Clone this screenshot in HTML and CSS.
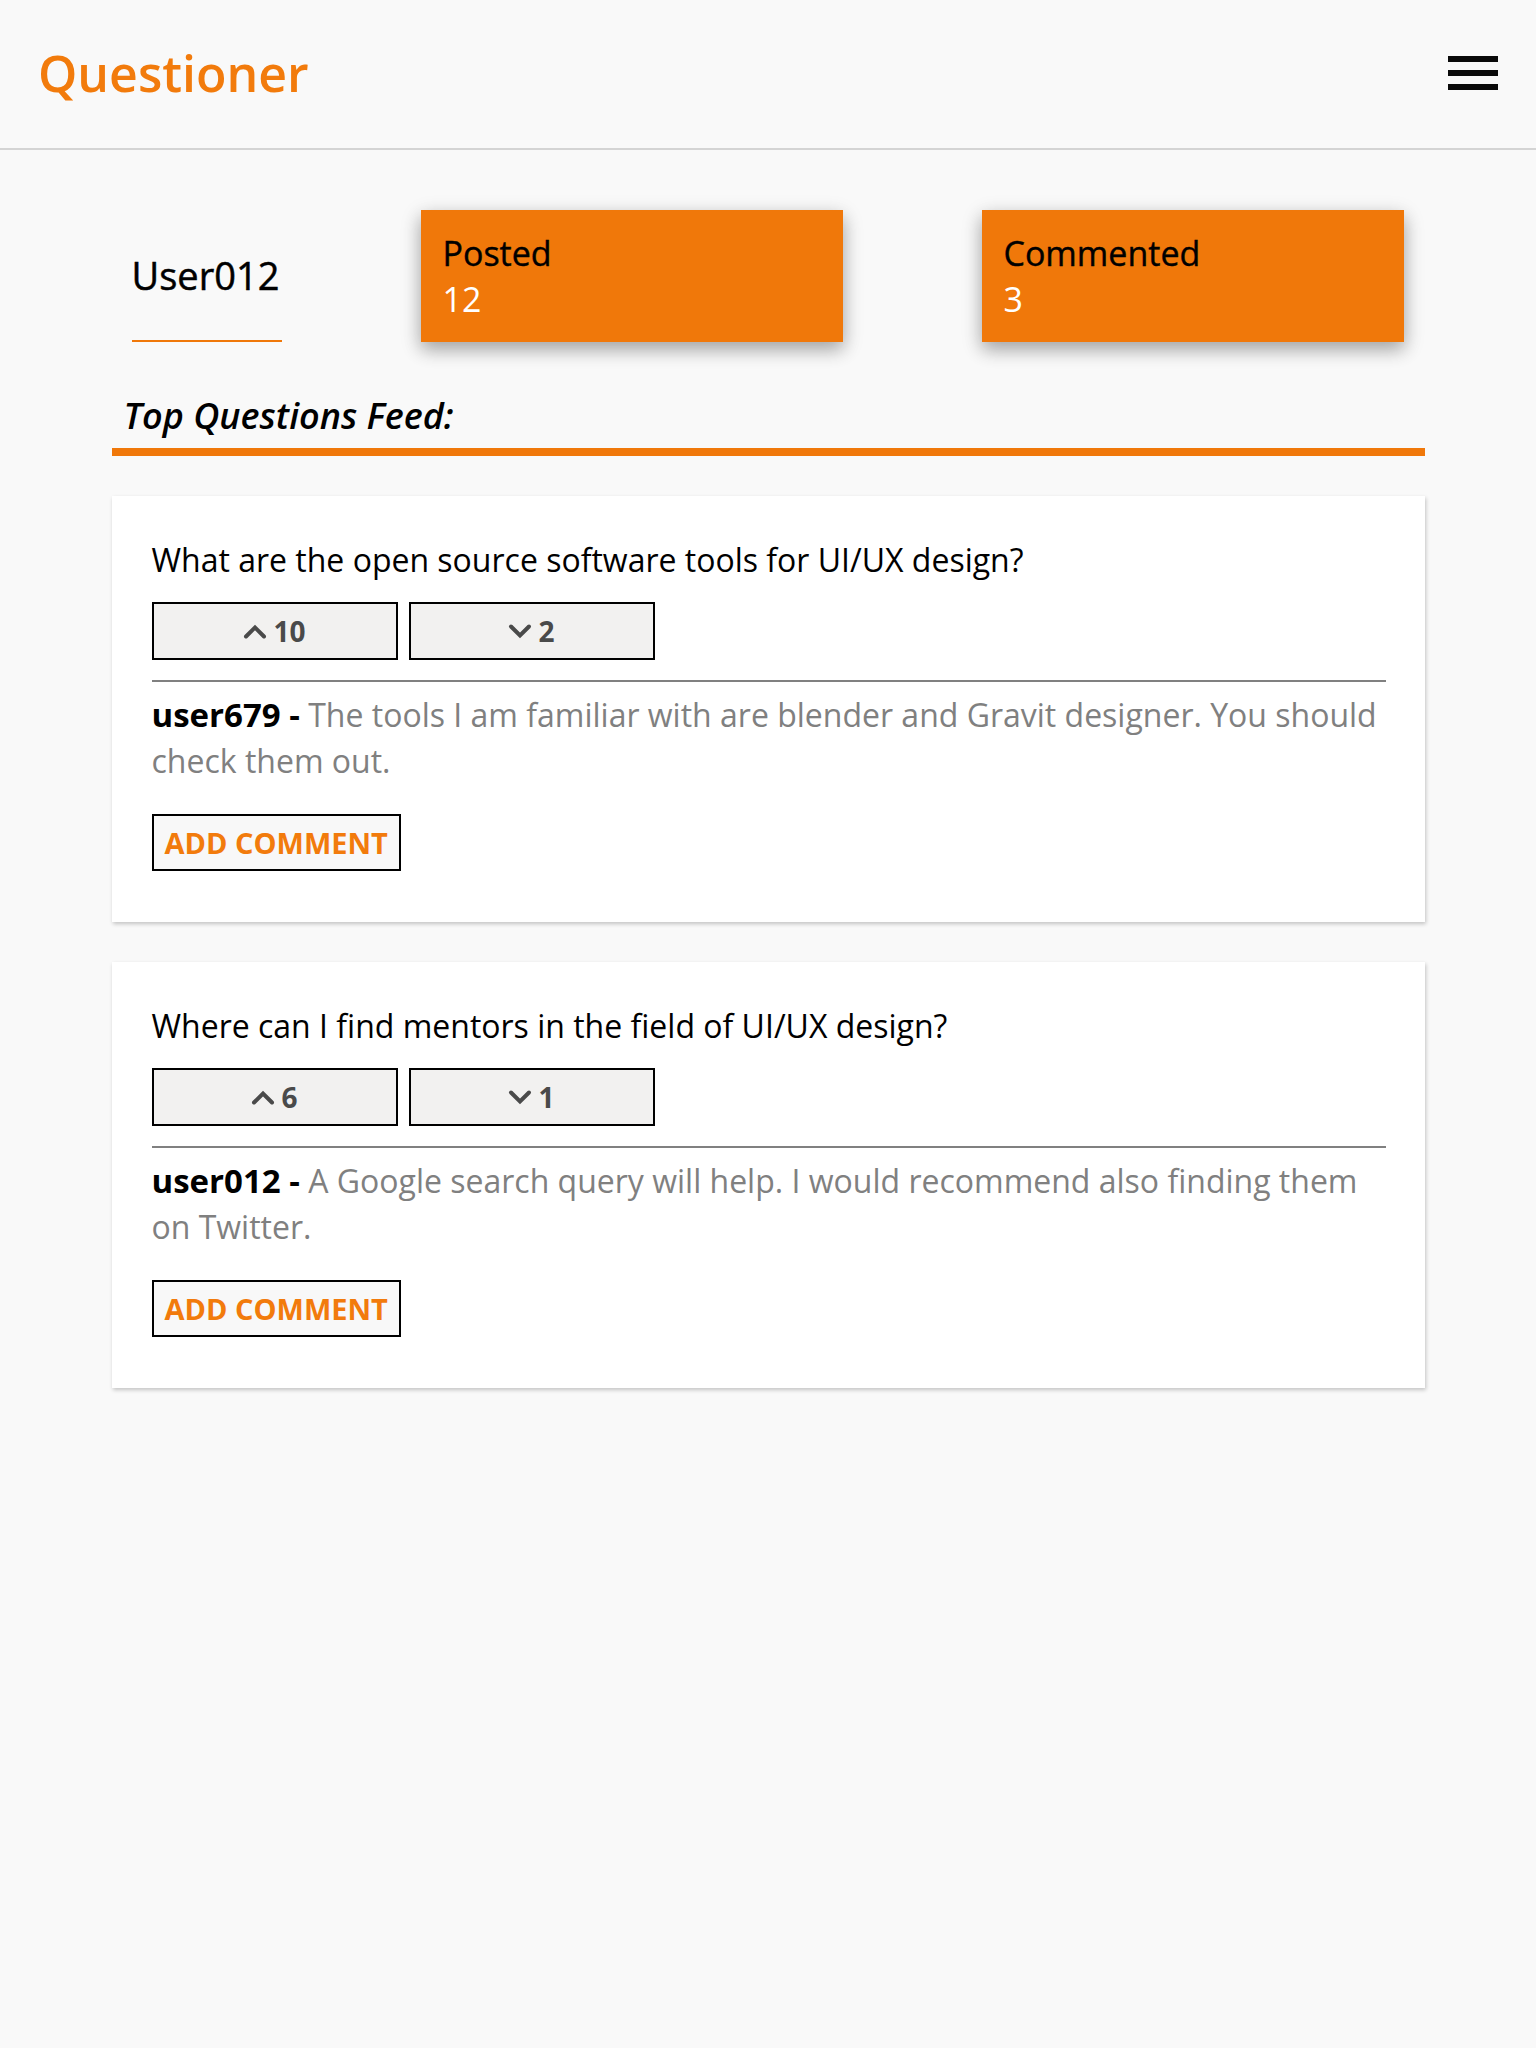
FILE: index.html
```html
<!DOCTYPE html>
<html lang="en">
<head>
<meta charset="utf-8">
<title>Questioner</title>
<link rel="stylesheet" href="styles.css">
</head>
<body>
<header class="topbar">
  <div class="logo">Questioner</div>
  <button class="menu" aria-label="Menu"><span></span><span></span><span></span></button>
</header>
<main class="page">
  <section class="profile">
    <div class="username">User012</div>
    <div class="stat">
      <div class="stat-label">Posted</div>
      <div class="stat-value">12</div>
    </div>
    <div class="stat">
      <div class="stat-label">Commented</div>
      <div class="stat-value">3</div>
    </div>
  </section>

  <h2 class="feed-title">Top Questions Feed:</h2>

  <article class="question-card">
    <p class="question">What are the open source software tools for UI/UX design?</p>
    <div class="votes">
      <button class="vote"><svg class="chev" viewBox="0 0 24 16" width="24" height="16"><polyline points="3,13.5 12,4.5 21,13.5"/></svg>10</button>
      <button class="vote"><svg class="chev" viewBox="0 0 24 16" width="24" height="16"><polyline points="3,3.5 12,12.5 21,3.5"/></svg>2</button>
    </div>
    <hr class="divider">
    <p class="comment"><span class="author">user679 -</span> The tools I am familiar with are blender and Gravit designer. You should check them out.</p>
    <button class="add-comment">ADD COMMENT</button>
  </article>

  <article class="question-card">
    <p class="question">Where can I find mentors in the field of UI/UX design?</p>
    <div class="votes">
      <button class="vote"><svg class="chev" viewBox="0 0 24 16" width="24" height="16"><polyline points="3,13.5 12,4.5 21,13.5"/></svg>6</button>
      <button class="vote"><svg class="chev" viewBox="0 0 24 16" width="24" height="16"><polyline points="3,3.5 12,12.5 21,3.5"/></svg>1</button>
    </div>
    <hr class="divider">
    <p class="comment"><span class="author">user012 -</span> A Google search query will help. I would recommend also finding them on Twitter.</p>
    <button class="add-comment">ADD COMMENT</button>
  </article>
</main>
</body>
</html>
```

FILE: styles.css
```css
* { box-sizing: border-box; }

html, body {
  margin: 0;
  padding: 0;
  background: #f9f9f9;
  font-family: "Open Sans", "Noto Sans", "Liberation Sans", sans-serif;
  color: #000;
}

.topbar {
  height: 150px;
  border-bottom: 2px solid #d4d4d4;
  display: flex;
  align-items: center;
  justify-content: space-between;
  padding: 0 38px 2px 38px;
}

.logo {
  color: #f27b0c;
  font-size: 50px;
  font-weight: 600;
}

.menu {
  width: 50px;
  height: 34px;
  padding: 0;
  border: 0;
  background: transparent;
  display: flex;
  flex-direction: column;
  justify-content: space-between;
}

.menu span {
  display: block;
  height: 6px;
  width: 50px;
  background: #0a0a0a;
}

.page {
  width: 1313px;
  margin: 0 auto;
  padding-bottom: 40px;
}

.profile {
  display: flex;
  gap: 139px;
  margin-top: 60px;
  padding-left: 20px;
}

.username {
  width: 150px;
  height: 132px;
  border-bottom: 2px solid #f0780a;
  display: flex;
  align-items: center;
  font-size: 38px;
  font-weight: 500;
  -webkit-text-stroke: 0.5px #000;
}

.stat {
  width: 422px;
  height: 132px;
  background: #f0780a;
  padding: 20px 22px;
  font-size: 34px;
  box-shadow: 0 8px 16px 0 rgba(0, 0, 0, 0.2), 0 6px 20px 0 rgba(0, 0, 0, 0.19);
}

.stat-label {
  color: #000;
  font-weight: 500;
  -webkit-text-stroke: 0.4px #000;
}

.stat-value {
  color: #fff;
}

.feed-title {
  margin: 49px 0 0 0;
  padding: 0 0 8px 12px;
  border-bottom: 8px solid #f0780a;
  font-size: 36px;
  font-style: italic;
  font-weight: 600;
}

.question-card {
  background: #fff;
  margin-top: 40px;
  padding: 42px 39px 51px 40px;
  box-shadow: 1px 2px 4px rgba(0, 0, 0, 0.22);
}

.question {
  margin: 0;
  font-size: 32px;
}

.votes {
  display: flex;
  gap: 11px;
  margin-top: 21px;
}

.vote {
  width: 246px;
  height: 58px;
  border: 2px solid #000;
  background: #f2f1f0;
  color: #4a4a4a;
  font-family: inherit;
  font-size: 28px;
  font-weight: 700;
  display: flex;
  align-items: center;
  justify-content: center;
  gap: 6px;
  padding: 0;
}

.chev {
  fill: none;
  stroke: #4a4a4a;
  stroke-width: 4;
  stroke-linecap: round;
  stroke-linejoin: miter;
}

.divider {
  margin: 20px 0 0 0;
  border: 0;
  height: 2px;
  background: #808080;
}

.comment {
  margin: 10px 0 0 0;
  font-size: 32px;
  line-height: 46px;
  color: #808080;
}

.author {
  color: #000;
  font-size: 33px;
  font-weight: 700;
}

.add-comment {
  display: block;
  margin-top: 30px;
  height: 57px;
  padding: 0 11px;
  border: 2px solid #000;
  background: #f8f8f8;
  color: #f27b0c;
  font-family: inherit;
  font-size: 29px;
  font-weight: 700;
}
```
